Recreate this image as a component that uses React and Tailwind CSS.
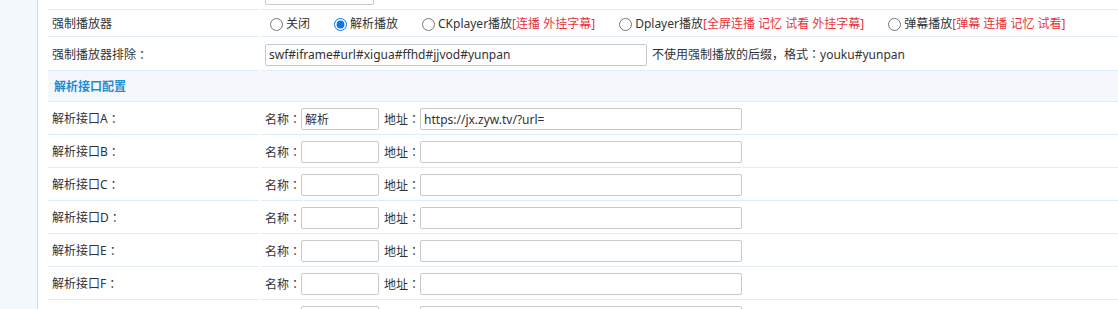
import React, { useState } from 'react';

const apis = [
  { key: 'A', name: '解析', url: 'https://jx.zyw.tv/?url=' },
  { key: 'B', name: '', url: '' },
  { key: 'C', name: '', url: '' },
  { key: 'D', name: '', url: '' },
  { key: 'E', name: '', url: '' },
  { key: 'F', name: '', url: '' },
  { key: 'G', name: '', url: '' },
];

const players = [
  { value: '0', label: '关闭' },
  { value: '1', label: '解析播放' },
  { value: '2', label: 'CKplayer播放', tip: '[连播 外挂字幕]' },
  { value: '3', label: 'Dplayer播放', tip: '[全屏连播 记忆 试看 外挂字幕]' },
  { value: '4', label: '弹幕播放', tip: '[弹幕 连播 记忆 试看]' },
];

const inputCls =
  'h-[22px] border border-[#c9c9c9] rounded-[2px] px-[3px] text-[12px] text-[#333] outline-none bg-white';

// full-width punctuation from the CJK fonts
const Colon = () => <span className="font-['Noto_Sans_CJK_TC',sans-serif]">：</span>;
const Comma = () => <span className="font-['Noto_Sans_CJK_SC',sans-serif]">，</span>;

const Row = ({ label, children, h = 'h-[33px]' }) => (
  <div className="flex gap-[2px]">
    <div className={`w-[211px] ${h} border-b border-[#e1edf6] flex items-center pl-[4px] pt-[2px]`}>{label}</div>
    <div className={`flex-1 ${h} border-b border-[#e1edf6] flex items-center pl-[4px] pt-[2px]`}>{children}</div>
  </div>
);

const App = () => {
  const [player, setPlayer] = useState('1');
  const [exclude, setExclude] = useState('swf#iframe#url#xigua#ffhd#jjvod#yunpan');
  const [list, setList] = useState(apis);

  const updateApi = (idx, field, value) => {
    const next = [...list];
    next[idx] = { ...next[idx], [field]: value };
    setList(next);
  };

  return (
    <div className="h-[309px] overflow-hidden flex bg-white text-[12px] text-[#333] font-['Noto_Sans','Noto_Sans_CJK_SC',sans-serif]">
      <div className="w-[38px] shrink-0 bg-[#f2f8fc] border-r border-[#c3dcec]" />
      <div className="flex-1 pl-[10px] mt-[-23px]">
        <Row label="">
          <input className={`${inputCls} w-[109px]`} defaultValue="" />
        </Row>

        <Row label="强制播放器" h="h-[27px]">
          {players.map((p) => (
            <label key={p.value} className="flex items-center mr-[19px] whitespace-nowrap">
              <input
                type="radio"
                name="player"
                value={p.value}
                checked={player === p.value}
                onChange={(e) => setPlayer(e.target.value)}
                className="w-[13px] h-[13px] ml-[5px] mr-[3px] accent-[#0a76e8]"
              />
              {p.label}
              {p.tip && <span className="text-[#e8323a]">{p.tip}</span>}
            </label>
          ))}
        </Row>

        <Row label={<>强制播放器排除<Colon /></>} h="h-[34px]">
          <input
            value={exclude}
            onChange={(e) => setExclude(e.target.value)}
            className={`${inputCls} w-[382px]`}
          />
          <span className="ml-[5px]">
            不使用强制播放的后缀<Comma />格式<Colon />youku#yunpan
          </span>
        </Row>

        <div className="h-[31px] bg-[#f4f7fb] border-b border-[#e1edf6] flex items-center pl-[6px] pt-[1px] text-[#1e8ed2] font-bold">
          解析接口配置
        </div>

        {list.map((api, idx) => (
          <Row key={api.key} label={<>解析接口{api.key}<Colon /></>}>
            <span>名称<Colon /></span>
            <input
              value={api.name}
              onChange={(e) => updateApi(idx, 'name', e.target.value)}
              className={`${inputCls} w-[78px]`}
            />
            <span className="ml-[5px]">地址<Colon /></span>
            <input
              value={api.url}
              onChange={(e) => updateApi(idx, 'url', e.target.value)}
              className={`${inputCls} w-[322px]`}
            />
          </Row>
        ))}
      </div>
    </div>
  );
};

export default App;
